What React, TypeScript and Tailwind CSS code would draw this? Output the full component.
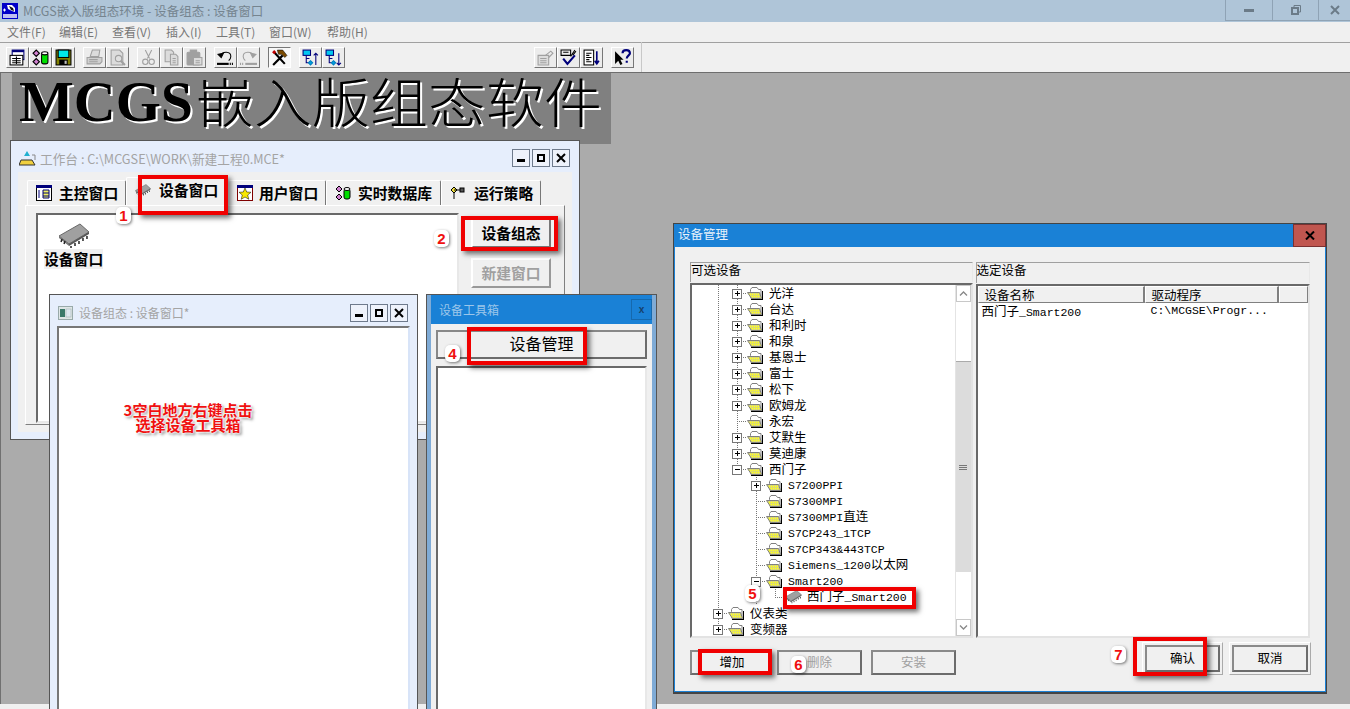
import type { ReactNode } from 'react';

const raised = 'border border-t-white border-l-white border-r-[#808080] border-b-[#808080]';
const sunken = 'border-2 border-t-[#696969] border-l-[#696969] border-r-[#e3e3e3] border-b-[#e3e3e3]';
const mono = 'font-["Liberation_Mono","Noto_Sans_CJK_SC",monospace] text-[11.5px]';

function Logo() {
  return (
    <svg width="16" height="16" viewBox="0 0 16 16" className="shrink-0">
      <rect width="16" height="16" fill="#0000c8" />
      <path d="M5 2h5l3 3v4l-3-1-4-2z" fill="#fff" />
      <path d="M7 3l4 2 1 3-3-1z" fill="#111" />
      <path d="M1 7h3M2.500 5.500v3" stroke="#fff" />
      <rect x="1" y="11" width="14" height="4" fill="#fff" opacity=".75" />
    </svg>
  );
}

function Chip({ size = 16 }: { size?: number }) {
  return (
    <svg width={size} height={size * 0.78} viewBox="0 0 32 25">
      <path d="M1 13L22 1l9 8-20 12z" fill="#a0a0a0" stroke="#666" />
      <path d="M1 13l10 8v2L1 15z" fill="#777" />
      <path d="M11 21L31 9v2L11 23z" fill="#555" />
      <path d="M4 16l-1 3M7 18l-1 3M13 23l0 2M17 20l0 3M21 18l0 3M25 15l0 3M29 13l0 3" stroke="#222" strokeWidth="1.500" />
    </svg>
  );
}

function Folder() {
  return (
    <svg width="16" height="13" viewBox="0 0 16 13" className="shrink-0">
      <defs>
        <pattern id="dither" width="2" height="2" patternUnits="userSpaceOnUse">
          <rect width="2" height="2" fill="#f0f040" />
          <rect width="1" height="1" fill="#c8c8a0" />
        </pattern>
      </defs>
      <path d="M15 4h1v9H4v-1h11z" fill="#000" />
      <path d="M3.500 4.500V2.500L5 .5h5L11.500 2.500h2.500v9h-10z" fill="#fff" stroke="#808080" />
      <path d="M.5 5.500h12l2 6h-10z" fill="url(#dither)" stroke="#808080" />
    </svg>
  );
}

function ToolIcon({ name, off }: { name: string; off?: boolean }) {
  const s = off ? '#a0a0a0' : '#000';
  const b = off ? '#a0a0a0' : '#00007b';
  const c = off ? '#dcdcdc' : '#fff';
  return (
    <svg width="17" height="17" viewBox="0 0 16 16" fill="none">
      {name === 'windows' && (
        <g>
          <rect x="3" y="1" width="11" height="9" fill={c} stroke={b} />
          <rect x="3" y="1" width="11" height="2" fill={b} />
          <rect x="1" y="6" width="12" height="9" fill={c} stroke={s} />
          <path d="M3 9h8M3 11h8M3 13h8M7 7v7" stroke={s} />
        </g>
      )}
      {name === 'data' && (
        <g>
          <path d="M1 4l3-3 3 3-3 3zM1 12l3-3 3 3-3 3z" fill="#d080d0" stroke={s} />
          <rect x="9" y="4" width="6" height="10" rx="2" fill="#00e000" stroke={s} />
          <ellipse cx="12" cy="4" rx="3" ry="1.500" fill={c} stroke={s} />
        </g>
      )}
      {name === 'save' && (
        <g>
          <rect x="1" y="1" width="14" height="14" fill="#808000" stroke={s} />
          <rect x="3" y="1" width="10" height="7" fill="#00e8e8" stroke={s} />
          <rect x="4" y="10" width="8" height="5" fill="#000" />
          <rect x="9" y="11" width="2" height="3" fill="#c0c0c0" />
        </g>
      )}
      {name === 'print' && (
        <g stroke={s}>
          <path d="M4 7l2-6h7l-1 6z" fill={c} />
          <path d="M1 8h14v4l-2 2H1z" fill="#d0d0d0" />
          <path d="M3 10h8M3 12h8" />
        </g>
      )}
      {name === 'preview' && (
        <g stroke={s}>
          <path d="M2 1h8l3 3v11H2z" fill={c} />
          <circle cx="9" cy="9" r="3" fill="#e0e0e0" />
          <path d="M11 11l4 4" strokeWidth="2" />
        </g>
      )}
      {name === 'cut' && (
        <g stroke={s}>
          <path d="M5 1l4 8M11 1L7 9" />
          <circle cx="5" cy="12" r="2.500" />
          <circle cx="11" cy="12" r="2.500" />
        </g>
      )}
      {name === 'copy' && (
        <g stroke={s}>
          <path d="M2 1h6l2 2v9H2z" fill={c} />
          <path d="M7 5h5l2 2v8H7z" fill={c} />
          <path d="M9 9h3M9 11h3M9 13h3" />
        </g>
      )}
      {name === 'paste' && (
        <g stroke={s}>
          <rect x="1" y="3" width="12" height="12" rx="1" fill="#a0a0a0" />
          <rect x="4" y="1" width="6" height="3" fill="#a0a0a0" />
          <rect x="7" y="8" width="8" height="7" fill={c} />
          <path d="M9 11h4M9 13h4" />
        </g>
      )}
      {name === 'undo' && (
        <g stroke={s}>
          <path d="M4 6c1-4 9-4 9 1 0 2-1 3-2 4" />
          <path d="M1 5l3 3 2-4z" fill={s} />
          <path d="M0 14h11" strokeWidth="2" />
          <path d="M12 14h3" strokeDasharray="1 1" strokeWidth="2" />
        </g>
      )}
      {name === 'redo' && (
        <g stroke={s}>
          <path d="M12 6C11 2 3 2 3 7c0 2 1 3 2 4" />
          <path d="M15 5l-3 3-2-4z" fill={s} />
          <path d="M5 14h11" strokeWidth="2" />
          <path d="M0 14h4" strokeDasharray="1 1" strokeWidth="2" />
        </g>
      )}
      {name === 'tools' && (
        <g>
          <path d="M2 15L11 6M3 3l10 11" stroke="#000" strokeWidth="2" />
          <path d="M6 1h5l4 5-2 2-3-3H7z" fill="#7b4a00" stroke="#000" strokeWidth=".5" />
          <path d="M1 3l2-2 2 2-2 2z" fill="#c00000" />
        </g>
      )}
      {(name === 'treeUp' || name === 'treeDown') && (
        <g stroke="#00007b">
          <rect x="1" y="1" width="7" height="5" fill="#00c8f0" />
          <path d="M4 6v7h4M4 9h3" />
          <path d="M8 11l2 2-2 2-2-2z" fill="#00a0e0" stroke="#0080c0" />
          {name === 'treeUp' ? <path d="M13 15V4m-2 2l2-2 2 2" /> : <path d="M13 4v11m-2-2l2 2 2-2" />}
        </g>
      )}
      {name === 'props' && (
        <g stroke={s}>
          <path d="M1 6h10v9H1z" fill={c} />
          <path d="M3 9h6M3 11h6M3 13h6M8 6l5-4 2 2-4 4" />
        </g>
      )}
      {name === 'check' && (
        <g>
          <path d="M1 1h9v5H1zM3 3h5" stroke="#000" />
          <path d="M10 7l4-6M12 6l3-4" stroke="#000" />
          <path d="M3 9l4 5 7-8" stroke="#00007b" strokeWidth="2" />
        </g>
      )}
      {name === 'sort' && (
        <g>
          <rect x="1" y="1" width="9" height="14" fill="#fff" stroke="#000" />
          <path d="M3 4h5M3 6h3M3 8h5M3 10h3M3 12h5" stroke="#000" />
          <path d="M13 2v12m-2-3l2 3 2-3" stroke="#00007b" strokeWidth="1.500" />
        </g>
      )}
      {name === 'help' && (
        <g>
          <path d="M1 2v12l3-3 2 4 2-1-2-4h3z" fill="#000" />
          <path d="M8 4c0-4 7-4 7 0 0 2-3 2-3 5M12 11v2" stroke="#00007b" strokeWidth="2" />
        </g>
      )}
    </svg>
  );
}

function ToolGroup({ names, className, off, pressed }: { names: string[]; className: string; off?: boolean; pressed?: boolean }) {
  const look = pressed
    ? 'bg-[#f8f8f8] border-t-[#777] border-l-[#777] border-r-white border-b-white'
    : 'bg-[#ececec] border-t-white border-l-white border-r-[#777] border-b-[#777]';
  return (
    <div className={`flex ${className}`}>
      {names.map((n) => (
        <div key={n} className={`w-[23px] h-[21px] flex items-center justify-center border ${look}`}>
          <ToolIcon name={n} off={off} />
        </div>
      ))}
    </div>
  );
}

function WinButton({ kind }: { kind: 'min' | 'max' | 'close' }) {
  return (
    <div className="w-[18px] h-[18px] flex items-center justify-center border border-[#6e7a8c] bg-[#eef2fb]">
      <svg width="10" height="10" viewBox="0 0 10 10">
        {kind === 'min' && <rect x="1" y="6" width="8" height="3" fill="#000" />}
        {kind === 'max' && <path d="M2 2h6v6H2z" fill="none" stroke="#000" strokeWidth="2" />}
        {kind === 'close' && <path d="M1 1l8 8M9 1L1 9" stroke="#000" strokeWidth="2" />}
      </svg>
    </div>
  );
}

function RedBox({ className }: { className: string }) {
  return <div className={`absolute border-[4px] border-[#f00000] shadow-[3px_3px_5px_rgba(0,0,0,0.55)] ${className}`} />;
}

function Badge({ n, className }: { n: number; className: string }) {
  return (
    <div className={`absolute w-[15px] h-[17px] rounded-[5px] bg-white flex items-center justify-center text-[15px] leading-none font-bold text-[#f01010] shadow-[1px_1px_3px_rgba(0,0,0,0.5)] font-["Liberation_Sans",sans-serif] ${className}`}>
      {n}
    </div>
  );
}

function Tab({ icon, label, className }: { icon: ReactNode; label: string; className: string }) {
  return (
    <div className={`flex items-center bg-[#f0f0f0] border border-b-0 border-t-white border-l-white border-r-[#777] rounded-t-[2px] pl-[8px] text-[14.8px] font-bold text-black ${className}`}>
      {icon}
      <span>{label}</span>
    </div>
  );
}

type TreeRow = { label: string; depth: number; mark?: '+' | '-'; chip?: boolean };

const treeRows: TreeRow[] = [
  { label: '光洋', depth: 1, mark: '+' },
  { label: '台达', depth: 1, mark: '+' },
  { label: '和利时', depth: 1, mark: '+' },
  { label: '和泉', depth: 1, mark: '+' },
  { label: '基恩士', depth: 1, mark: '+' },
  { label: '富士', depth: 1, mark: '+' },
  { label: '松下', depth: 1, mark: '+' },
  { label: '欧姆龙', depth: 1, mark: '+' },
  { label: '永宏', depth: 1 },
  { label: '艾默生', depth: 1, mark: '+' },
  { label: '莫迪康', depth: 1, mark: '+' },
  { label: '西门子', depth: 1, mark: '-' },
  { label: 'S7200PPI', depth: 2, mark: '+' },
  { label: 'S7300MPI', depth: 2 },
  { label: 'S7300MPI直连', depth: 2 },
  { label: 'S7CP243_1TCP', depth: 2 },
  { label: 'S7CP343&443TCP', depth: 2 },
  { label: 'Siemens_1200以太网', depth: 2 },
  { label: 'Smart200', depth: 2, mark: '-' },
  { label: '西门子_Smart200', depth: 3, chip: true },
  { label: '仪表类', depth: 0, mark: '+' },
  { label: '变频器', depth: 0, mark: '+' },
];

// splits a label so the latin part gets the narrow fixed-width look of the original
function Mixed({ text }: { text: string }) {
  const parts = text.match(/[\x00-\x7f]+|[^\x00-\x7f]+/g) ?? [];
  return (
    <>
      {parts.map((p, i) =>
        /^[\x00-\x7f]/.test(p) ? (
          <span key={i} className={mono}>{p}</span>
        ) : (
          <span key={i}>{p}</span>
        ),
      )}
    </>
  );
}

function TreeLines({ row, index }: { row: TreeRow; index: number }) {
  const cx = 26 + row.depth * 19;
  const last = index === treeRows.length - 1;
  const width = cx + 10;
  return (
    <svg width={width} height="16" className="shrink-0" shapeRendering="crispEdges">
      <g stroke="#777" strokeDasharray="1 1">
        <path d={`M26.500 0V${last ? 8 : 16}`} />
        {row.depth >= 1 && index <= 11 && <path d={`M45.500 0V${index === 11 ? 8 : 16}`} />}
        {row.depth >= 2 && <path d={`M64.500 0V${index === 18 ? 8 : 16}`} />}
        {row.depth === 3 && <path d="M83.500 0V8" />}
        <path d={`M${cx} 8.500H${width}`} />
      </g>
      {row.mark && (
        <g>
          <rect x={cx - 4.5} y="4" width="9" height="9" fill="#fff" stroke="#777" />
          <path d={`M${cx - 2} 8.500h5`} stroke="#000" />
          {row.mark === '+' && <path d={`M${cx + 0.5} 6v5`} stroke="#000" />}
        </g>
      )}
    </svg>
  );
}

function TreeView() {
  return (
    <div className="flex-1 overflow-hidden bg-white text-[12.5px] text-black">
      {treeRows.map((row, i) => (
        <div key={row.label} className="flex h-4 items-center">
          <TreeLines row={row} index={i} />
          {row.chip ? <Chip size={17} /> : <Folder />}
          <span className={`whitespace-nowrap leading-4 ${row.chip ? 'ml-[5px]' : 'ml-[6px]'}`}>
            <Mixed text={row.label} />
          </span>
        </div>
      ))}
    </div>
  );
}

function ScrollBar() {
  return (
    <div className="w-4 flex flex-col bg-white border-l border-[#e4e4e4]">
      <div className="h-[17px] flex items-center justify-center border border-[#c8c8c8] bg-white">
        <svg width="9" height="5" viewBox="0 0 9 5"><path d="M1 4.500l3.500-3.500 3.500 3.500" fill="none" stroke="#888" strokeWidth="1.300" /></svg>
      </div>
      <div className="h-[59px]" />
      <div className="h-[211px] bg-[#dcdcdc] border-t border-[#aaa] flex flex-col items-center justify-center gap-[1px]">
        <div className="w-2 h-[1px] bg-[#777]" />
        <div className="w-2 h-[1px] bg-[#777]" />
        <div className="w-2 h-[1px] bg-[#777]" />
      </div>
      <div className="flex-1" />
      <div className="h-[17px] flex items-center justify-center border border-[#c8c8c8] bg-white">
        <svg width="9" height="5" viewBox="0 0 9 5"><path d="M1 .5l3.500 3.500 3.500-3.500" fill="none" stroke="#888" strokeWidth="1.300" /></svg>
      </div>
    </div>
  );
}

function DialogButton({ label, off, className }: { label: string; off?: boolean; className: string }) {
  return (
    <div className={`flex items-center justify-center border-2 border-t-[#8a8a8a] border-l-[#8a8a8a] border-r-[#6c6c6c] border-b-[#6c6c6c] bg-[#f0f0f0] text-[12.5px] ${off ? 'text-[#a0a0a0]' : 'text-black'} ${className}`}>
      {label}
    </div>
  );
}

function DeviceManager() {
  return (
    <div className="absolute left-[673px] top-[223px] w-[654px] h-[471px] flex flex-col bg-[#1a81d6] border border-[#444] border-b-2 font-['Noto_Sans_CJK_SC',sans-serif]">
      <div className="h-[23px] flex items-center justify-between shrink-0">
        <span className="ml-[4px] mb-[3px] text-[12.5px] text-[#e8f2fb]">设备管理</span>
        <div className="w-[33px] h-[23px] bg-[#c0564f] border border-[#7a3030] flex items-center justify-center">
          <svg width="10" height="9" viewBox="0 0 10 9"><path d="M1 .5l8 8M9 .5l-8 8" stroke="#000" strokeWidth="2" /></svg>
        </div>
      </div>
      <div className="flex-1 mx-[1px] mb-[1px] bg-[#f0f0f0] flex flex-col px-[15px] pt-[15px]">
        <div className="flex gap-[3px] h-[376px]">
          <div className="w-[283px] flex flex-col">
            <div className="h-[21px] border border-b-0 border-[#a0a0a0] border-r-[#e8e8e8] text-[12.5px] leading-[13px] text-black">可选设备</div>
            <div className={`h-[355px] flex ${sunken} mt-[1px]`}>
              <TreeView />
              <ScrollBar />
            </div>
          </div>
          <div className="w-[335px] flex flex-col">
            <div className="h-[21px] border border-b-0 border-[#a0a0a0] border-r-[#e8e8e8] text-[12.5px] leading-[13px] text-black">选定设备</div>
            <div className={`h-[355px] flex flex-col bg-white ${sunken} mt-[1px]`}>
              <div className="flex h-[17px] text-[12.5px] leading-[15px] text-black shrink-0">
                <div className={`w-[167px] bg-[#f0f0f0] pl-[6px] ${raised} border-r-2`}>设备名称</div>
                <div className={`w-[134px] bg-[#f0f0f0] pl-[6px] ${raised} border-r-2`}>驱动程序</div>
                <div className={`flex-1 bg-[#f0f0f0] ${raised}`} />
              </div>
              <div className="flex text-[12.5px] leading-[16px] text-black">
                <span className="w-[168px] pl-[4px]"><Mixed text="西门子_Smart200" /></span>
                <span className={`pl-[5px] ${mono}`}>C:\MCGSE\Progr...</span>
              </div>
            </div>
          </div>
        </div>
        <div className="flex items-start mt-[12px]">
          <DialogButton label="增加" className="w-[81px] h-[25px] pl-[3px]" />
          <DialogButton label="删除" off className="w-[85px] h-[25px] ml-[6px]" />
          <DialogButton label="安装" off className="w-[85px] h-[25px] ml-[9px]" />
          <div className="ml-auto -mr-[1px] -mt-[8px] flex gap-[6px]">
            <div className={`w-[81px] h-[33px] p-[2px] ${raised} border-r-[#aaa] border-b-[#aaa]`}>
              <DialogButton label="确认" className="w-full h-full" />
            </div>
            <div className={`w-[82px] h-[33px] p-[2px] ${raised} border-r-[#aaa] border-b-[#aaa]`}>
              <DialogButton label="取消" className="w-full h-full" />
            </div>
          </div>
        </div>
      </div>
    </div>
  );
}

function Workbench() {
  return (
    <div className="absolute left-[10px] top-[140px] w-[570px] h-[300px] bg-[#e6eefc] border border-[#555] flex flex-col">
      <div className="h-[31px] flex items-center pt-[5px] pl-[8px] pr-[9px] shrink-0">
        <svg width="18" height="16" viewBox="0 0 18 16" className="shrink-0">
          <path d="M8 0l3 5H5z" fill="#20b0d0" />
          <path d="M2 9h11l3 5H0z" fill="#f0d040" stroke="#333" />
          <path d="M13 4h3v5" fill="none" stroke="#888" />
        </svg>
        <span className="ml-[3px] text-[12.7px] text-[#a4a4a4]">工作台 : C:\MCGSE\WORK\新建工程0.MCE*</span>
        <div className="ml-auto flex gap-[2px] -mt-[2px]">
          <WinButton kind="min" />
          <WinButton kind="max" />
          <WinButton kind="close" />
        </div>
      </div>
      <div className="flex-1 mx-[7px] mb-[7px] bg-[#f0f0f0] px-[7px] pt-[6px]">
        <div className="flex items-end h-[27px] pl-[2px]">
          <Tab
            className="w-[99px] h-[25px] gap-[7px]"
            label="主控窗口"
            icon={
              <svg width="16" height="16" viewBox="0 0 16 16"><rect x=".5" y=".5" width="15" height="15" fill="#fff" stroke="#000" /><rect width="16" height="3" fill="#00007b" /><path d="M3 5v8M7 5h6v8H7zM7 8h6M7 11h6" stroke="#00007b" fill="#f0f060" /></svg>
            }
          />
          <Tab
            className="w-[102px] h-[28px] gap-[8px] -mt-[2px] items-start pt-[1px]"
            label="设备窗口"
            icon={<div className="mt-[5px]"><Chip size={16} /></div>}
          />
          <Tab
            className="w-[98px] h-[25px] gap-[6px]"
            label="用户窗口"
            icon={
              <svg width="16" height="16" viewBox="0 0 16 16"><rect x=".5" y=".5" width="15" height="15" fill="#fff" stroke="#800000" /><rect width="16" height="3" fill="#00007b" /><path d="M8 3l1.700 4 4.300.3-3.300 2.700 1.100 4.300L8 12l-3.800 2.300 1.100-4.300L2 7.300 6.300 7z" fill="#f8e800" stroke="#000" strokeWidth=".5" /></svg>
            }
          />
          <Tab
            className="w-[115px] h-[25px] gap-[7px]"
            label="实时数据库"
            icon={
              <svg width="16" height="16" viewBox="0 0 16 16"><path d="M1 4l3-3 3 3-3 3zM1 12l3-3 3 3-3 3z" fill="#d080d0" stroke="#000" /><rect x="9" y="4" width="6" height="10" rx="2" fill="#00e000" stroke="#000" /><ellipse cx="12" cy="4" rx="3" ry="1.500" fill="#fff" stroke="#000" /></svg>
            }
          />
          <Tab
            className="w-[100px] h-[25px] gap-[8px]"
            label="运行策略"
            icon={
              <svg width="16" height="16" viewBox="0 0 16 16"><path d="M4 2l3 3-3 3-3-3z" fill="#f0e040" stroke="#000" /><path d="M4 8v6M4 5h6" stroke="#000" /><rect x="10" y="3" width="4" height="4" fill="#555" stroke="#000" /></svg>
            }
          />
        </div>
        <div className={`h-[220px] flex bg-[#f0f0f0] ${raised} pl-[10px] pt-[7px]`}>
          <div className="w-[423px] h-[210px] bg-white border-2 border-t-[#696969] border-l-[#696969] border-r-[#e8e8e8] border-b-[#e8e8e8] flex flex-col items-start">
            <div className="ml-[20px] mt-[8px]"><Chip size={32} /></div>
            <span className="ml-[6px] mt-[1px] bg-[#f0f0f0] text-[14.8px] leading-[20px] font-bold text-black">设备窗口</span>
          </div>
          <div className="flex flex-col gap-[10px] ml-[12px] mt-[5px]">
            <div className="w-[80px] h-[30px] flex items-center justify-center bg-[#f0f0f0] text-[14.8px] font-bold text-black border-2 border-t-white border-l-white border-r-[#777] border-b-[#777]">设备组态</div>
            <div className="w-[80px] h-[30px] flex items-center justify-center bg-[#f0f0f0] text-[14.8px] font-bold text-[#a0a0a0] border-2 border-t-white border-l-white border-r-[#999] border-b-[#999]">新建窗口</div>
          </div>
        </div>
      </div>
    </div>
  );
}

function ConfigWindow() {
  return (
    <div className="absolute left-[49px] top-[294px] w-[369px] h-[420px] bg-[#e6eefc] border border-[#555] flex flex-col">
      <div className="h-[31px] flex items-center pt-[4px] pl-[8px] pr-[9px] shrink-0">
        <svg width="15" height="14" viewBox="0 0 15 14" className="shrink-0">
          <rect x=".5" y=".5" width="14" height="13" fill="#dfe6e6" stroke="#9aa" />
          <rect x="2" y="3" width="5" height="8" fill="#3c7a6a" />
          <rect x="8" y="3" width="5" height="8" fill="#dfe8f0" stroke="#9aa" strokeWidth=".5" />
        </svg>
        <span className="ml-[6px] text-[12px] text-[#a4a4a4]">设备组态 : 设备窗口*</span>
        <div className="ml-auto flex gap-[2px]">
          <WinButton kind="min" />
          <WinButton kind="max" />
          <WinButton kind="close" />
        </div>
      </div>
      <div className="flex-1 ml-[7px] mr-[7px] bg-white border-2 border-t-[#777] border-l-[#777] border-r-[#d8e4f8] border-b-0" />
    </div>
  );
}

function ToolboxWindow() {
  return (
    <div className="absolute left-[426px] top-[294px] w-[231px] h-[420px] bg-[#7fabd6] border border-[#555] border-b-0 flex flex-col px-[4px]">
      <div className="h-[29px] flex items-center justify-between bg-[#1a81d6] shrink-0 pl-[8px]">
        <span className="text-[12px] text-[#9cc6ea]">设备工具箱</span>
        <div className="w-[21px] h-[21px] border border-[#1669ad] flex items-center justify-center text-[10px] leading-none text-[#16406b] font-['Liberation_Sans',sans-serif] font-bold">x</div>
      </div>
      <div className="flex-1 bg-[#f0f0f0] px-[5px] pt-[6px] flex flex-col">
        <div className="h-[29px] shrink-0 flex items-center justify-center border-2 border-t-[#888] border-l-[#888] border-r-[#6c6c6c] border-b-[#6c6c6c] text-[16px] leading-none text-black pb-[3px]">设备管理</div>
        <div className="flex-1 mt-[7px] bg-white border-2 border-t-[#696969] border-l-[#696969] border-r-[#e8e8e8] border-b-0" />
      </div>
    </div>
  );
}

export default function App() {
  return (
    <div className="relative w-[1350px] h-[709px] overflow-hidden flex flex-col bg-[#f0f0f0] font-['Noto_Sans_CJK_SC',sans-serif]">
      <div className="h-[22px] shrink-0 flex items-center bg-[#afc5d8] pl-[2px]">
        <Logo />
        <span className="ml-[5px] text-[12.5px] text-[#75848f] whitespace-nowrap">MCGS嵌入版组态环境 - 设备组态 : 设备窗口</span>
        <div className="ml-auto h-[21px] self-start flex text-[#6b7b88] border-b border-[#8fa3b5]">
          <div className="w-[47px] border-l border-[#8fa3b5] flex items-center justify-center">
            <div className="w-[10px] h-[3px] bg-[#6b7b88]" />
          </div>
          <div className="w-[46px] border-l border-[#8fa3b5] flex items-center justify-center">
            <svg width="10" height="10" viewBox="0 0 10 10"><path d="M3 2V.5h6.500V7H8" fill="none" stroke="#6b7b88" /><rect x="1" y="3" width="6" height="6" fill="none" stroke="#6b7b88" strokeWidth="2" /></svg>
          </div>
          <div className="w-[32px] border-l border-[#8fa3b5] flex items-center justify-center">
            <svg width="10" height="10" viewBox="0 0 10 10"><path d="M1 1l8 8M9 1L1 9" stroke="#6b7b88" strokeWidth="2" /></svg>
          </div>
        </div>
      </div>
      <div className="h-[20px] shrink-0 flex items-center pl-[7px] text-[12px] text-[#777] whitespace-nowrap">
        <span className="w-[52px]">文件(F)</span>
        <span className="w-[53px]">编辑(E)</span>
        <span className="w-[54px]">查看(V)</span>
        <span className="w-[50px]">插入(I)</span>
        <span className="w-[53px]">工具(T)</span>
        <span className="w-[58px]">窗口(W)</span>
        <span>帮助(H)</span>
      </div>
      <div className="h-[31px] shrink-0 flex items-center border-t-[1px] border-b-[1px] border-t-[#a0a0a0] border-b-[#6e6e6e] bg-[#f0f0f0] pb-[1px]">
        <ToolGroup className="ml-[6px]" names={['windows', 'data', 'save']} />
        <ToolGroup className="ml-[8px]" names={['print', 'preview']} off />
        <ToolGroup className="ml-[8px]" names={['cut', 'copy', 'paste']} off />
        <ToolGroup className="ml-[8px]" names={['undo']} />
        <ToolGroup className="" names={['redo']} off />
        <ToolGroup className="ml-[8px]" names={['tools']} pressed />
        <ToolGroup className="ml-[8px]" names={['treeUp', 'treeDown']} />
        <ToolGroup className="ml-[189px]" names={['props']} off />
        <ToolGroup className="" names={['check', 'sort']} />
        <ToolGroup className="ml-[8px]" names={['help']} />
        <div className="ml-[7px] w-[1px] h-[30px] bg-[#c8c8c8]" />
      </div>

      <div className="relative flex-1 bg-[#ababab] border-l border-[#707070]">
        <div className="ml-[11px] w-[599px] h-[71px] bg-[#808080] flex items-start pl-[7px] whitespace-nowrap text-black [text-shadow:2px_2px_0_#fff] font-['Liberation_Serif',serif]">
          <span className="font-bold text-[58px] leading-[58px]">MCGS</span>
          <span className="ml-[3px] inline-block origin-top scale-y-[.92] font-['Noto_Sans_CJK_SC',sans-serif] font-light text-[58px] leading-[58px]">嵌入版组态软件</span>
        </div>
      </div>
      <div className="h-[5px] shrink-0 bg-[#f0f0f0]" />

      <Workbench />
      <ConfigWindow />
      <ToolboxWindow />
      <DeviceManager />

      <div className="absolute left-[98px] top-[402px] w-[180px] text-center text-[15px] leading-[15px] font-bold text-[#f01010] [text-shadow:0_0_2px_#fff,0_0_2px_#fff,0_0_3px_#fff,2px_2px_3px_rgba(0,0,0,0.5)]">
        <div>3空白地方右键点击</div>
        <div>选择设备工具箱</div>
      </div>

      <RedBox className="left-[138px] top-[175px] w-[90px] h-[40px]" />
      <RedBox className="left-[461px] top-[216px] w-[97px] h-[35px]" />
      <RedBox className="left-[467px] top-[327px] w-[120px] h-[38px]" />
      <RedBox className="left-[783px] top-[587px] w-[133px] h-[22px]" />
      <RedBox className="left-[698px] top-[649px] w-[74px] h-[26px]" />
      <RedBox className="left-[1133px] top-[637px] w-[74px] h-[39px]" />

      <Badge n={1} className="left-[116px] top-[207px]" />
      <Badge n={2} className="left-[434px] top-[230px]" />
      <Badge n={4} className="left-[445px] top-[345px]" />
      <Badge n={5} className="left-[745px] top-[585px]" />
      <Badge n={6} className="left-[791px] top-[656px]" />
      <Badge n={7} className="left-[1111px] top-[646px]" />
    </div>
  );
}
